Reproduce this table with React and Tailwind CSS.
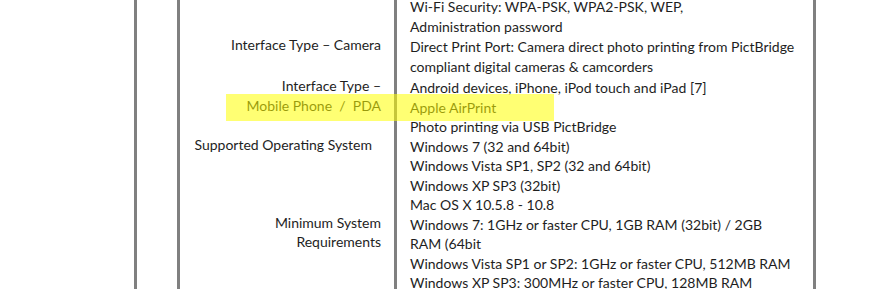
import React from "react";

const rows = [
  { label: [], lines: ["Wi-Fi Security: WPA-PSK, WPA2-PSK, WEP,", "Administration password"], pt: "pt-0" },
  { label: ["Interface Type – Camera"], lines: ["Direct Print Port: Camera direct photo printing from PictBridge", "compliant digital cameras & camcorders"], pt: "pt-[1px]" },
  { label: ["Interface Type –", "Mobile Phone  /  PDA"], lines: ["Android devices, iPhone, iPod touch and iPad [7]", "Apple AirPrint", "Photo printing via USB PictBridge"], pt: "pt-[2px]" },
  { label: ["Supported Operating System"], lines: ["Windows 7 (32 and 64bit)", "Windows Vista SP1, SP2 (32 and 64bit)", "Windows XP SP3 (32bit)", "Mac OS X 10.5.8 - 10.8"], pt: "pt-0", pr: "pr-[22px]" },
  { label: ["Minimum System", "Requirements"], lines: ["Windows 7: 1GHz or faster CPU, 1GB RAM (32bit) / 2GB", "RAM (64bit", "Windows Vista SP1 or SP2: 1GHz or faster CPU, 512MB RAM", "Windows XP SP3: 300MHz or faster CPU, 128MB RAM"], pt: "pt-0" },
];

export default function App() {
  return (
    <div className="relative w-[882px] h-[289px] overflow-hidden bg-white text-[#1e1e1e] text-[14px] leading-[19.5px]" style={{ fontFamily: "Lato, 'Liberation Sans', sans-serif" }}>
      <div className="flex h-full">
        <div className="w-[134px] shrink-0" />
        <div className="w-[43px] shrink-0 border-l-[3px] border-[#808080]" />
        <div className="w-[639px] shrink-0 border-l-[3px] border-r-[3px] border-[#808080] flex flex-col -mt-[3px]">
          {rows.map((r, i) => (
            <div key={i} className="grid grid-cols-[214px_419px]">
              <div className={`${r.pt} ${r.pr || "pr-[13px]"} text-right whitespace-pre relative -top-[2px]`}>
                {r.label.map((l, j) => (
                  <div key={j}>{l}</div>
                ))}
              </div>
              <div className={`${r.pt} pl-[13px] border-l-[3px] border-[#808080] whitespace-nowrap`}>
                {r.lines.map((l, j) => (
                  <div key={j}>{l}</div>
                ))}
              </div>
            </div>
          ))}
          <div className="grid grid-cols-[214px_419px] flex-1">
            <div />
            <div className="border-l-[3px] border-[#808080]" />
          </div>
        </div>
      </div>
      <div className="absolute left-[226px] top-[94px] w-[328px] h-[27px] bg-[#ffff00]/55" />
    </div>
  );
}
